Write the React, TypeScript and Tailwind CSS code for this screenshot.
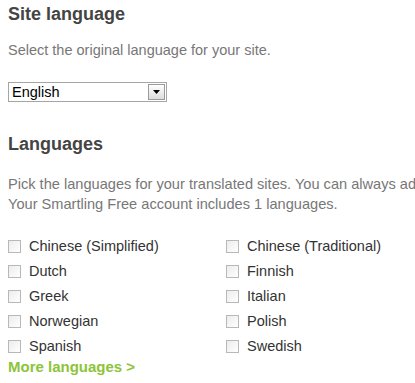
import React from "react";

const left = ["Chinese (Simplified)", "Dutch", "Greek", "Norwegian", "Spanish"];
const right = ["Chinese (Traditional)", "Finnish", "Italian", "Polish", "Swedish"];

function Box() {
  return (
    <span className="inline-block w-[13px] h-[13px] border border-[#b8b8b8] bg-gradient-to-br from-[#ececec] to-white mr-[8px] shrink-0" />
  );
}

function Item({ label }: { label: string }) {
  return (
    <div className="flex items-center h-[25px] text-[14.5px] text-[#333]">
      <Box />
      <span>{label}</span>
    </div>
  );
}

export default function App() {
  return (
    <div className="w-[415px] h-[383px] bg-white overflow-hidden pl-[8px] pt-[3px] font-['Liberation_Sans',Arial,sans-serif]">
      <h1 className="text-[18px] font-bold text-[#444] leading-[22px]">Site language</h1>
      <p className="mt-[16px] text-[14.5px] text-[#777] leading-[18px]">Select the original language for your site.</p>
      <div className="mt-[23px] flex w-[159px] h-[20px] border border-[#a5a5a5] bg-white">
        <span className="flex-1 text-[14.5px] text-black leading-[18px] pl-[3px]">English</span>
        <span className="w-[17px] h-[16px] m-[1px] border border-[#9a9a9a] bg-gradient-to-b from-white to-[#dcdcdc] flex items-center justify-center">
          <svg width="7" height="4" viewBox="0 0 7 4"><path d="M0 0h7L3.5 4z" fill="#000" /></svg>
        </span>
      </div>
      <h2 className="mt-[31px] text-[18px] font-bold text-[#444] leading-[22px]">Languages</h2>
      <p className="mt-[19px] text-[14.6px] text-[#777] leading-[20px] whitespace-nowrap">
        Pick the languages for your translated sites. You can always add more later.
        <br />
        Your Smartling Free account includes 1 languages.
      </p>
      <div className="mt-[20px] grid grid-cols-[218px_1fr]">
        <div>{left.map((l) => <Item key={l} label={l} />)}</div>
        <div>{right.map((l) => <Item key={l} label={l} />)}</div>
      </div>
      <div className="-mt-[2px] text-[15px] font-bold text-[#8cc43a] leading-[20px]">More languages &gt;</div>
    </div>
  );
}
